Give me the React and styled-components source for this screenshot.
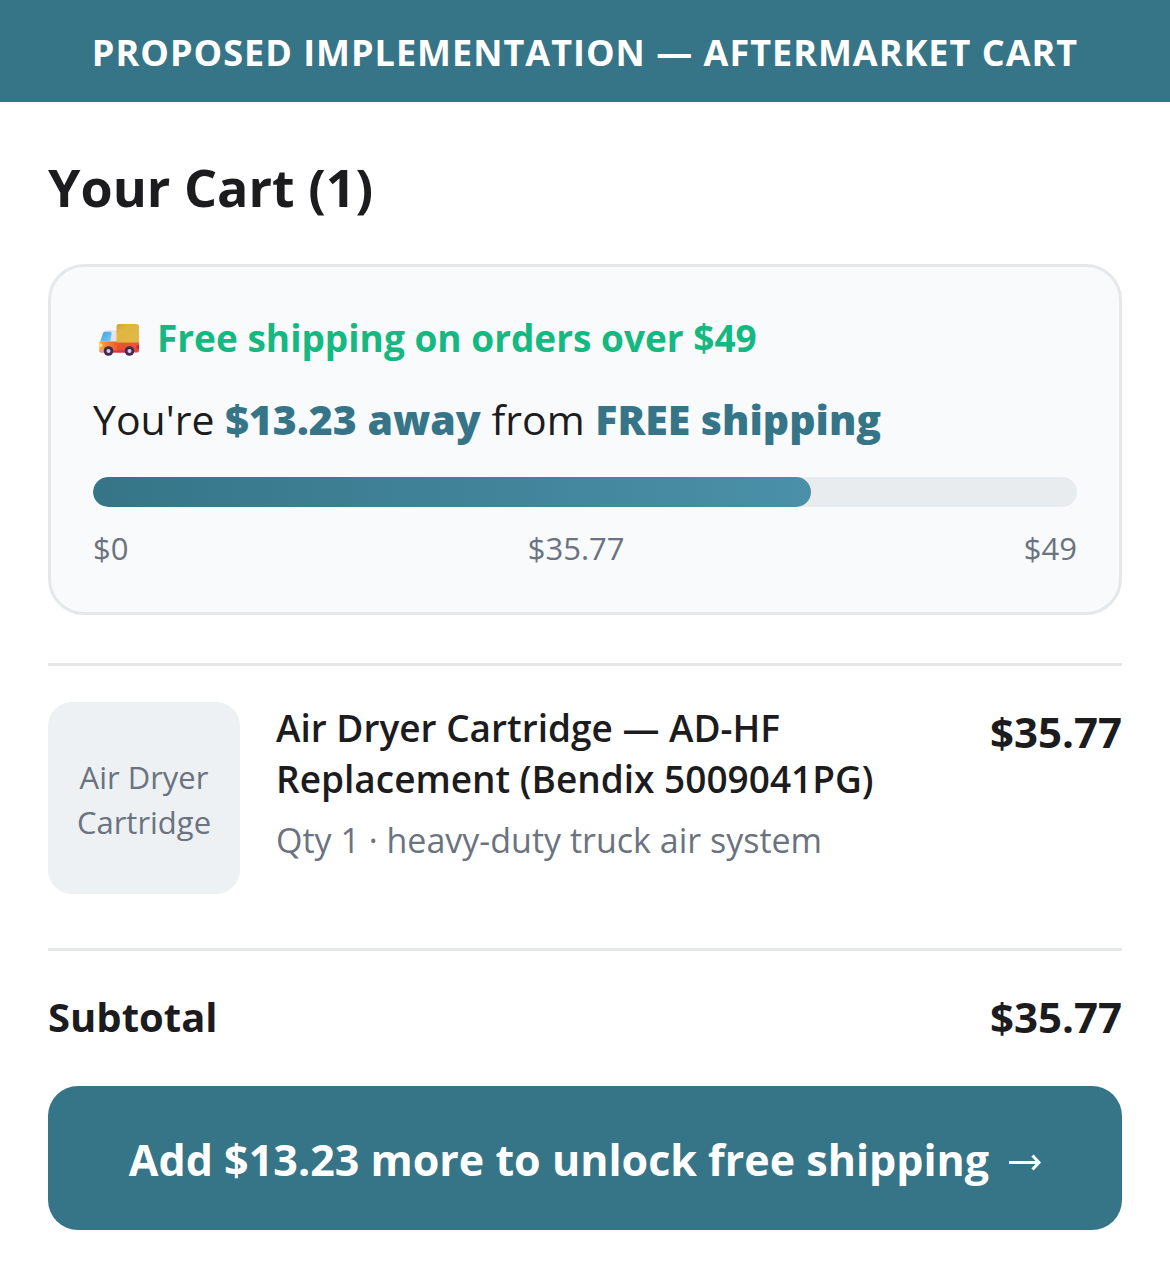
import styled, { createGlobalStyle } from 'styled-components';

const THRESHOLD = 49;
const subtotal = 35.77;
const remaining = (THRESHOLD - subtotal).toFixed(2);

const TruckIcon = () => (
  <Truck viewBox="0 -5 40 37" aria-hidden="true">
    <defs>
      <linearGradient id="cargo" x1="0" y1="0" x2="1" y2="1">
        <stop offset="0" stopColor="#d0a03c" />
        <stop offset="0.3" stopColor="#e0b640" />
        <stop offset="1" stopColor="#e2b84a" />
      </linearGradient>
      <linearGradient id="chassis" x1="0" y1="0" x2="0" y2="1">
        <stop offset="0" stopColor="#e2602a" />
        <stop offset="1" stopColor="#f0403a" />
      </linearGradient>
      <linearGradient id="cab" x1="0" y1="0" x2="1" y2="0">
        <stop offset="0" stopColor="#ffa43a" />
        <stop offset="1" stopColor="#e8602a" />
      </linearGradient>
      <linearGradient id="glass" x1="0" y1="0" x2="1" y2="1">
        <stop offset="0" stopColor="#3f9fe0" />
        <stop offset="1" stopColor="#6fd0f5" />
      </linearGradient>
    </defs>
    <path d="M4 8.500q.8-2.300 3.500-2.300H18V20H.8z" fill="#e6e1ee" />
    <path d="M4 9.500q.6-1.800 2.200-1.800h5.300q1.200 0 1.100 1.200l-1.200 8.600H1.200z" fill="url(#glass)" />
    <path d="M.8 17.500H18V28.500H2q-1.700 0-1.700-1.700V19z" fill="url(#cab)" />
    <path d="M18 18h22v8.500q0 2-2 2H18z" fill="url(#chassis)" />
    <path d="M17.500 2.500q0-2.500 2.500-2.500h17q3 0 3 3V18.500H17.500z" fill="url(#cargo)" />
    <path d="M.6 19.500h1.700q1.200 0 1.200 1.700T2.300 23H.3z" fill="#ffe66a" />
    <path d="M.3 26h5v2.500H2q-1.700 0-1.700-1.500z" fill="#d9a0a0" />
    <path d="M14 26.500h13v2H14z" fill="#c93a55" />
    <rect x="37.500" y="21" width="2.500" height="4" rx="1" fill="#c8204f" />
    <circle cx="9.500" cy="27" r="4.800" fill="#3f2a52" />
    <circle cx="9.500" cy="27" r="2" fill="#d9cdea" />
    <circle cx="30.500" cy="27" r="4.800" fill="#3f2a52" />
    <circle cx="30.500" cy="27" r="2" fill="#d9cdea" />
  </Truck>
);

const App = () => {
  return (
    <>
      <GlobalStyle />
      <Banner>PROPOSED IMPLEMENTATION — AFTERMARKET CART</Banner>
      <CartLayout>
        <CartTitle>Your Cart (1)</CartTitle>
        <ShippingCard>
          <ShippingOffer>
            <TruckIcon />
            <span>Free shipping on orders over ${THRESHOLD}</span>
          </ShippingOffer>
          <ShippingMessage>
            You're <strong>${remaining} away</strong> from <strong>FREE shipping</strong>
          </ShippingMessage>
          <ProgressTrack
            role="progressbar"
            aria-label="Free shipping progress"
            aria-valuenow={subtotal}
            aria-valuemin={0}
            aria-valuemax={THRESHOLD}
          >
            <ProgressFill style={{ width: `${Math.floor((subtotal / THRESHOLD) * 100)}%` }} />
          </ProgressTrack>
          <ProgressLabels>
            <span>$0</span>
            <span>${subtotal}</span>
            <span>${THRESHOLD}</span>
          </ProgressLabels>
        </ShippingCard>
        <CartItem>
          <Thumbnail>Air Dryer Cartridge</Thumbnail>
          <ItemInfo>
            <ItemName>Air Dryer Cartridge — AD-HF Replacement (Bendix 5009041PG)</ItemName>
            <ItemMeta>Qty 1 · heavy-duty truck air system</ItemMeta>
          </ItemInfo>
          <Price>${subtotal}</Price>
        </CartItem>
        <SubtotalRow>
          <span>Subtotal</span>
          <Price>${subtotal}</Price>
        </SubtotalRow>
        <UnlockButton type="button">
          Add ${remaining} more to unlock free shipping
          <ArrowIcon viewBox="0 0 34 22" aria-hidden="true">
            <path d="M2 13.500h29" />
            <path d="M25.500 6.500l6.500 7l-6.500 7" />
          </ArrowIcon>
        </UnlockButton>
      </CartLayout>
    </>
  );
};

export default App;

const GlobalStyle = createGlobalStyle`
  * {
    box-sizing: border-box;
  }

  body {
    margin: 0;
    background-color: #ffffff;
    color: #1c1c1e;
    font-family: 'Open Sans', 'Noto Sans', sans-serif;
  }
`;

const Banner = styled.header`
  padding: 29px 24px 25px;
  background-color: #367588;
  color: #ffffff;
  font-size: 36px;
  font-weight: 700;
  letter-spacing: 1px;
  line-height: 48px;
  text-align: center;
`;

const CartLayout = styled.main`
  padding: 49px 48px 48px;
`;

const CartTitle = styled.h1`
  margin: 0 0 41px;
  font-size: 52px;
  font-weight: 700;
  line-height: 72px;
`;

const ShippingCard = styled.section`
  padding: 42px;
  margin-bottom: 48px;
  background-color: #f8fafb;
  border: 3px solid #e5e7e9;
  border-radius: 36px;
`;

const ShippingOffer = styled.div`
  display: flex;
  align-items: center;
  gap: 18px;
  padding-left: 6px;
  margin-bottom: 25px;
  color: #14b880;
  font-size: 37px;
  font-weight: 700;
  line-height: 57px;
`;

const Truck = styled.svg`
  width: 40px;
  height: 37px;
`;

const ShippingMessage = styled.p`
  margin: 0 0 29px;
  font-size: 41px;
  line-height: 57px;

  strong {
    color: #367588;
    font-weight: 800;
  }
`;

const ProgressTrack = styled.div`
  height: 30px;
  margin-bottom: 20px;
  overflow: hidden;
  background-color: #e8ecef;
  border-radius: 15px;
`;

const ProgressFill = styled.div`
  height: 100%;
  background: linear-gradient(90deg, #367588, #4a90a8);
  border-radius: 15px;
`;

const ProgressLabels = styled.div`
  display: flex;
  justify-content: space-between;
  color: #6b7280;
  font-size: 31px;
  line-height: 43px;
`;

const CartItem = styled.section`
  display: flex;
  align-items: flex-start;
  gap: 36px;
  padding: 36px 0 54px;
  border-top: 3px solid #e5e7e9;
  border-bottom: 3px solid #e5e7e9;
`;

const Thumbnail = styled.div`
  display: flex;
  align-items: center;
  flex-shrink: 0;
  width: 192px;
  height: 192px;
  padding: 4px 24px 0;
  background-color: #edf1f4;
  border-radius: 24px;
  color: #6b7280;
  font-size: 31px;
  line-height: 45px;
  text-align: center;
`;

const ItemInfo = styled.div`
  flex: 1;
`;

const ItemName = styled.h2`
  margin: 0 0 12px;
  font-size: 37px;
  font-weight: 600;
  line-height: 51px;
`;

const ItemMeta = styled.p`
  margin: 0;
  color: #6b7280;
  font-size: 34px;
  line-height: 48px;
`;

const Price = styled.span`
  font-size: 42px;
  font-weight: 700;
  line-height: 60px;
`;

const SubtotalRow = styled.div`
  display: flex;
  justify-content: space-between;
  padding: 36px 0 39px;
  font-size: 40px;
  font-weight: 700;
  line-height: 60px;
`;

const UnlockButton = styled.button`
  display: flex;
  align-items: center;
  justify-content: center;
  gap: 18px;
  width: 100%;
  padding: 44px 24px 40px;
  background-color: #367588;
  border: none;
  border-radius: 30px;
  color: #ffffff;
  font-family: inherit;
  font-size: 43px;
  font-weight: 700;
  line-height: 60px;
  cursor: pointer;
`;

const ArrowIcon = styled.svg`
  width: 34px;
  height: 22px;
  fill: none;
  stroke: currentColor;
  stroke-width: 3px;
`;
